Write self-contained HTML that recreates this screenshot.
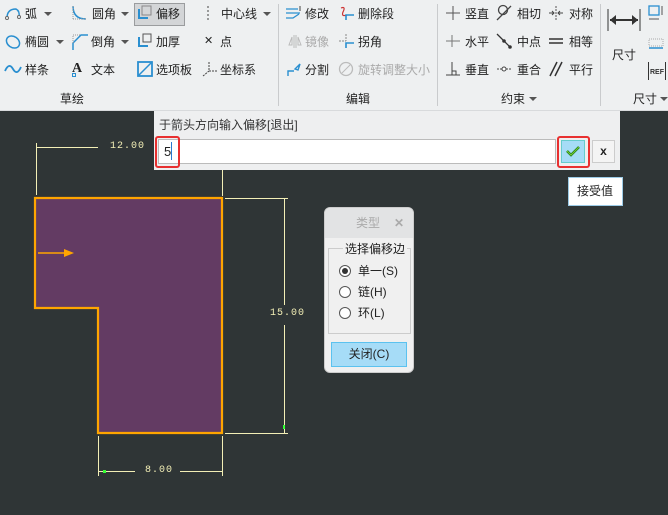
<!DOCTYPE html>
<html><head><meta charset="utf-8"><style>
*{margin:0;padding:0;box-sizing:border-box}
body{width:668px;height:515px;overflow:hidden;background:#2f3536;font-family:"Liberation Sans","Noto Sans CJK SC",sans-serif;font-size:12px;color:#222;position:relative}
.rib{position:absolute;left:0;top:0;width:668px;height:111px;background:#eef0f1;border-bottom:1px solid #d8dadc}
.t{position:absolute;white-space:nowrap;line-height:14px}
.g{color:#aaa}
.sep{position:absolute;top:4px;width:1px;height:102px;background:#c9cbcd}
.dd{position:absolute;width:0;height:0;border-left:4px solid transparent;border-right:4px solid transparent;border-top:4px solid #555}
svg.i{position:absolute;overflow:visible}
.dim{position:absolute;color:#f3efb6;font-family:"Liberation Mono",monospace;font-size:10px;letter-spacing:1px}
</style></head><body>
<div class="rib">
<div style="position:absolute;left:134px;top:3px;width:51px;height:23px;background:#d3d5d7;border:1px solid #9a9c9e"></div>
<!-- row1 -->
<svg class="i" style="left:5px;top:6px" width="17" height="16"><path d="M2 12 Q2 3 11 3 Q15 5 14 11" fill="none" stroke="#2a8fd0" stroke-width="1.5"/><circle cx="2" cy="12" r="1.5" fill="#fff" stroke="#666"/><circle cx="14" cy="11" r="1.5" fill="#fff" stroke="#666"/></svg>
<div class="t" style="left:25px;top:7px">弧</div><div class="dd" style="left:44px;top:12px"></div>
<svg class="i" style="left:70px;top:5px" width="18" height="18"><path d="M3 1 Q3 14 16 14" fill="none" stroke="#2a8fd0" stroke-width="1.5"/><path d="M3 14 H16 M3 14 V1" stroke="#999" stroke-dasharray="1 1" fill="none"/></svg>
<div class="t" style="left:92px;top:7px">圆角</div><div class="dd" style="left:121px;top:12px"></div>
<svg class="i" style="left:137px;top:5px" width="16" height="16"><rect x="5" y="1" width="9" height="9" fill="none" stroke="#888"/><path d="M2 4 V13 H11" fill="none" stroke="#2a8fd0" stroke-width="2"/></svg>
<div class="t" style="left:156px;top:7px">偏移</div>
<svg class="i" style="left:206px;top:5px" width="6" height="18"><path d="M2 1V17" stroke="#444" stroke-dasharray="2 2"/></svg>
<div class="t" style="left:221px;top:7px">中心线</div><div class="dd" style="left:263px;top:12px"></div>
<!-- row2 -->
<svg class="i" style="left:5px;top:34px" width="17" height="16"><ellipse cx="8" cy="8" rx="7" ry="5.5" transform="rotate(35 8 8)" fill="none" stroke="#2a8fd0" stroke-width="1.5"/></svg>
<div class="t" style="left:25px;top:35px">椭圆</div><div class="dd" style="left:56px;top:40px"></div>
<svg class="i" style="left:71px;top:33px" width="18" height="18"><path d="M2 17 L2 10 L10 2 H17" fill="none" stroke="#2a8fd0" stroke-width="1.5"/><path d="M2 10V2H10" stroke="#999" stroke-dasharray="1 1" fill="none"/></svg>
<div class="t" style="left:91px;top:35px">倒角</div><div class="dd" style="left:121px;top:40px"></div>
<svg class="i" style="left:137px;top:33px" width="16" height="16"><rect x="6" y="1" width="8" height="8" fill="none" stroke="#555"/><path d="M2 4 V13 H11" fill="none" stroke="#2a8fd0" stroke-width="2"/></svg>
<div class="t" style="left:156px;top:35px">加厚</div>
<div class="t" style="left:204px;top:34px;font-size:11px">✕</div>
<div class="t" style="left:220px;top:35px">点</div>
<!-- row3 -->
<svg class="i" style="left:4px;top:62px" width="18" height="14"><path d="M1 9 Q5 0 9 7 Q13 14 17 5" fill="none" stroke="#2a8fd0" stroke-width="1.8"/></svg>
<div class="t" style="left:25px;top:63px">样条</div>
<div class="t" style="left:72px;top:62px;font-family:'Liberation Serif',serif;font-weight:bold;font-size:14px">A</div><div style="position:absolute;left:72px;top:73px;width:4px;height:4px;border:1px solid #2a8fd0"></div>
<div class="t" style="left:91px;top:63px">文本</div>
<svg class="i" style="left:137px;top:61px" width="17" height="16"><rect x="1" y="1" width="14" height="14" fill="none" stroke="#2a8fd0" stroke-width="1.8"/><path d="M1 15 L15 1" stroke="#2a8fd0" stroke-width="1.5"/></svg>
<div class="t" style="left:156px;top:63px">选项板</div>
<svg class="i" style="left:201px;top:61px" width="17" height="16"><path d="M8 1V10 H16 M2 15 L8 10" fill="none" stroke="#444" stroke-dasharray="2 1"/></svg>
<div class="t" style="left:220px;top:63px">坐标系</div>
<div class="t" style="left:60px;top:92px">草绘</div>
<div class="sep" style="left:278px"></div>
<!-- edit -->
<svg class="i" style="left:285px;top:5px" width="18" height="16"><path d="M1 4H13 M1 8H15 M1 13 H8 L14 9" fill="none" stroke="#2a8fd0" stroke-width="1.3"/><path d="M15 1V6" stroke="#444"/></svg>
<div class="t" style="left:305px;top:7px">修改</div>
<svg class="i" style="left:287px;top:33px" width="16" height="16"><path d="M7 2V15 M9 2V15 M5 4L2 12H5Z M11 4L14 12H11Z" fill="none" stroke="#bbb"/></svg>
<div class="t g" style="left:305px;top:35px">镜像</div>
<svg class="i" style="left:286px;top:61px" width="17" height="16"><path d="M2 15V10H8 M9 8L14 3L12 9Z" fill="none" stroke="#2a8fd0" stroke-width="1.4"/></svg>
<div class="t" style="left:305px;top:63px">分割</div>
<svg class="i" style="left:338px;top:5px" width="18" height="16"><path d="M3 3Q8 1 5 7 Q3 12 9 10" fill="none" stroke="#c33" stroke-width="1.2"/><path d="M8 15V10H16" fill="none" stroke="#2a8fd0" stroke-width="1.6"/></svg>
<div class="t" style="left:358px;top:7px">删除段</div>
<svg class="i" style="left:338px;top:33px" width="18" height="16"><path d="M1 8H8 M8 1V8" stroke="#888" stroke-dasharray="2 1" fill="none"/><path d="M8 15V10H16" fill="none" stroke="#2a8fd0" stroke-width="1.6"/></svg>
<div class="t" style="left:358px;top:35px">拐角</div>
<svg class="i" style="left:338px;top:61px" width="16" height="16"><circle cx="8" cy="8" r="6.5" fill="none" stroke="#bbb" stroke-width="1.3"/><path d="M4 12L12 4" stroke="#bbb"/></svg>
<div class="t g" style="left:358px;top:63px">旋转调整大小</div>
<div class="t" style="left:346px;top:92px">编辑</div>
<div class="sep" style="left:437px"></div>
<!-- constraints -->
<svg class="i" style="left:445px;top:5px" width="16" height="16"><path d="M8 1V15 M1 8H15" stroke="#555"/></svg>
<div class="t" style="left:465px;top:7px">竖直</div>
<svg class="i" style="left:496px;top:4px" width="16" height="18"><circle cx="7" cy="6" r="4.5" fill="none" stroke="#444" stroke-width="1.3"/><path d="M1 16L15 2" stroke="#444" stroke-width="1.3"/></svg>
<div class="t" style="left:517px;top:7px">相切</div>
<svg class="i" style="left:548px;top:5px" width="16" height="16"><path d="M8 1V15" stroke="#555" stroke-dasharray="2 1"/><path d="M1 8H6 M10 8H15 M4 6L6 8L4 10 M12 6L10 8L12 10" fill="none" stroke="#444"/></svg>
<div class="t" style="left:569px;top:7px">对称</div>
<svg class="i" style="left:445px;top:33px" width="16" height="16"><path d="M7 2V14 M1 8H15" stroke="#777"/></svg>
<div class="t" style="left:465px;top:35px">水平</div>
<svg class="i" style="left:496px;top:33px" width="16" height="16"><path d="M1 1L15 15" stroke="#333" stroke-width="1.3"/><circle cx="8" cy="8" r="1.8" fill="#333"/><circle cx="14" cy="14" r="1.8" fill="#333"/></svg>
<div class="t" style="left:517px;top:35px">中点</div>
<svg class="i" style="left:548px;top:33px" width="16" height="16"><path d="M1 6H15 M1 10H15" stroke="#333" stroke-width="1.5"/></svg>
<div class="t" style="left:569px;top:35px">相等</div>
<svg class="i" style="left:445px;top:61px" width="16" height="16"><path d="M7 1V14 M1 14H15" stroke="#444"/><path d="M7 10H11V14" fill="none" stroke="#444"/></svg>
<div class="t" style="left:465px;top:63px">垂直</div>
<svg class="i" style="left:496px;top:61px" width="16" height="16"><path d="M1 8H15" stroke="#444" stroke-dasharray="2 1"/><circle cx="8" cy="8" r="2" fill="#fff" stroke="#444"/></svg>
<div class="t" style="left:517px;top:63px">重合</div>
<svg class="i" style="left:548px;top:61px" width="16" height="16"><path d="M2 15L9 1 M7 15L14 1" stroke="#333" stroke-width="1.5"/></svg>
<div class="t" style="left:569px;top:63px">平行</div>
<div class="t" style="left:501px;top:92px">约束</div><div class="dd" style="left:529px;top:97px"></div>
<div class="sep" style="left:600px"></div>
<svg class="i" style="left:607px;top:8px" width="34" height="24"><path d="M1 1V23 M33 1V23" stroke="#333"/><path d="M3 12H31" stroke="#333" stroke-width="2"/><path d="M3 12L9 7V17Z M31 12L25 7V17Z" fill="#333"/></svg>
<div class="t" style="left:612px;top:48px">尺寸</div>
<svg class="i" style="left:648px;top:5px" width="16" height="16"><rect x="1" y="1" width="10" height="9" fill="none" stroke="#2a8fd0" stroke-width="1.3"/><path d="M14 1V10 M1 14H11" stroke="#555"/></svg>
<svg class="i" style="left:648px;top:38px" width="16" height="12"><rect x="1" y="1" width="14" height="7" fill="none" stroke="#aaa" stroke-dasharray="1 1"/><path d="M1 10H15" stroke="#2a8fd0" stroke-width="1.5"/></svg>
<div class="t" style="left:648px;top:62px;font-size:7px;font-weight:bold;color:#333;border-left:1px solid #333;border-right:1px solid #333;padding:4px 1px 0">REF</div>
<div class="t" style="left:633px;top:92px">尺寸</div><div class="dd" style="left:660px;top:97px"></div>
</div>

<!-- drawing -->
<svg style="position:absolute;left:0;top:0" width="668" height="515">
<g stroke="#f3efb6" stroke-width="1" fill="none">
<path d="M36.5 143V195 M36.5 147.5H98 M222.5 168V196 M225 198.5H288 M225 433.5H288 M284.5 198V305 M284.5 325V433 M98.5 436V476 M222.5 436V476 M98 471.5H135 M180 471.5H222"/>
</g>
<path d="M35 198H222V433H98V308H35Z" fill="#633b63" stroke="#ffa500" stroke-width="2.2"/>
<path d="M38 253H68" stroke="#ffa500" stroke-width="1.6"/><path d="M74 253L64 249V257Z" fill="#ffa500"/>
<rect x="283" y="425" width="2" height="4" fill="#3f3"/><rect x="103" y="470" width="3" height="3" fill="#3f3"/>
</svg>
<div class="dim" style="left:110px;top:141px">12.00</div>
<div class="dim" style="left:270px;top:308px">15.00</div>
<div class="dim" style="left:145px;top:465px">8.00</div>

<!-- input panel -->
<div style="position:absolute;left:154px;top:111px;width:466px;height:59px;background:#eeeff0"></div>
<div class="t" style="left:159px;top:118px;color:#333">于箭头方向输入偏移[退出]</div>
<div style="position:absolute;left:158px;top:139px;width:398px;height:25px;background:#fff;border:1px solid #bbb"></div>
<div class="t" style="left:164px;top:145px;font-size:13px;color:#222">5</div>
<div style="position:absolute;left:171px;top:142px;width:1px;height:18px;background:#2a7ad0"></div>
<div style="position:absolute;left:155px;top:136px;width:25px;height:32px;border:2px solid #e83030;border-radius:3px"></div>
<div style="position:absolute;left:561px;top:140px;width:24px;height:23px;background:#a6dcf7;border:1px solid #6cc"></div>
<svg class="i" style="left:565px;top:144px" width="16" height="14"><path d="M2 7L6 11L14 3" fill="none" stroke="#1a7a1a" stroke-width="2.5"/><path d="M2 7L6 11L14 3" fill="none" stroke="#7c3" stroke-width="1"/></svg>
<div style="position:absolute;left:557px;top:136px;width:33px;height:32px;border:2px solid #e83030;border-radius:3px"></div>
<div style="position:absolute;left:592px;top:140px;width:23px;height:23px;background:#f4f4f4;border:1px solid #ccc;text-align:center;font-weight:bold;font-size:12px;line-height:20px">x</div>
<div style="position:absolute;left:568px;top:177px;width:55px;height:29px;background:#fff;border:1px solid #9ccbe6"></div>
<div class="t" style="left:577px;top:184px">接受值</div>

<!-- type dialog -->
<div style="position:absolute;left:324px;top:207px;width:90px;height:166px;background:#f0f0f0;border-radius:6px;overflow:hidden;border:1px solid #ccc">
<div style="height:30px;background:#e2e3e4"></div>
</div>
<div class="t" style="left:356px;top:216px;color:#aaa">类型</div>
<div class="t" style="left:394px;top:216px;color:#aaa;font-weight:bold">✕</div>
<div style="position:absolute;left:328px;top:248px;width:83px;height:86px;border:1px solid #ccc"></div>
<div class="t" style="left:343px;top:242px;background:#f0f0f0;padding:0 2px">选择偏移边</div>
<div style="position:absolute;left:339px;top:265px;width:12px;height:12px;border:1px solid #555;border-radius:50%;background:#fff"></div>
<div style="position:absolute;left:342px;top:268px;width:6px;height:6px;border-radius:50%;background:#333"></div>
<div class="t" style="left:358px;top:264px">单一(S)</div>
<div style="position:absolute;left:339px;top:286px;width:12px;height:12px;border:1px solid #555;border-radius:50%;background:#fff"></div>
<div class="t" style="left:358px;top:285px">链(H)</div>
<div style="position:absolute;left:339px;top:307px;width:12px;height:12px;border:1px solid #555;border-radius:50%;background:#fff"></div>
<div class="t" style="left:358px;top:306px">环(L)</div>
<div style="position:absolute;left:331px;top:342px;width:76px;height:25px;background:#a6dcf7;border:1px solid #5bc2ef;text-align:center;line-height:23px">关闭(C)</div>
</body></html>
